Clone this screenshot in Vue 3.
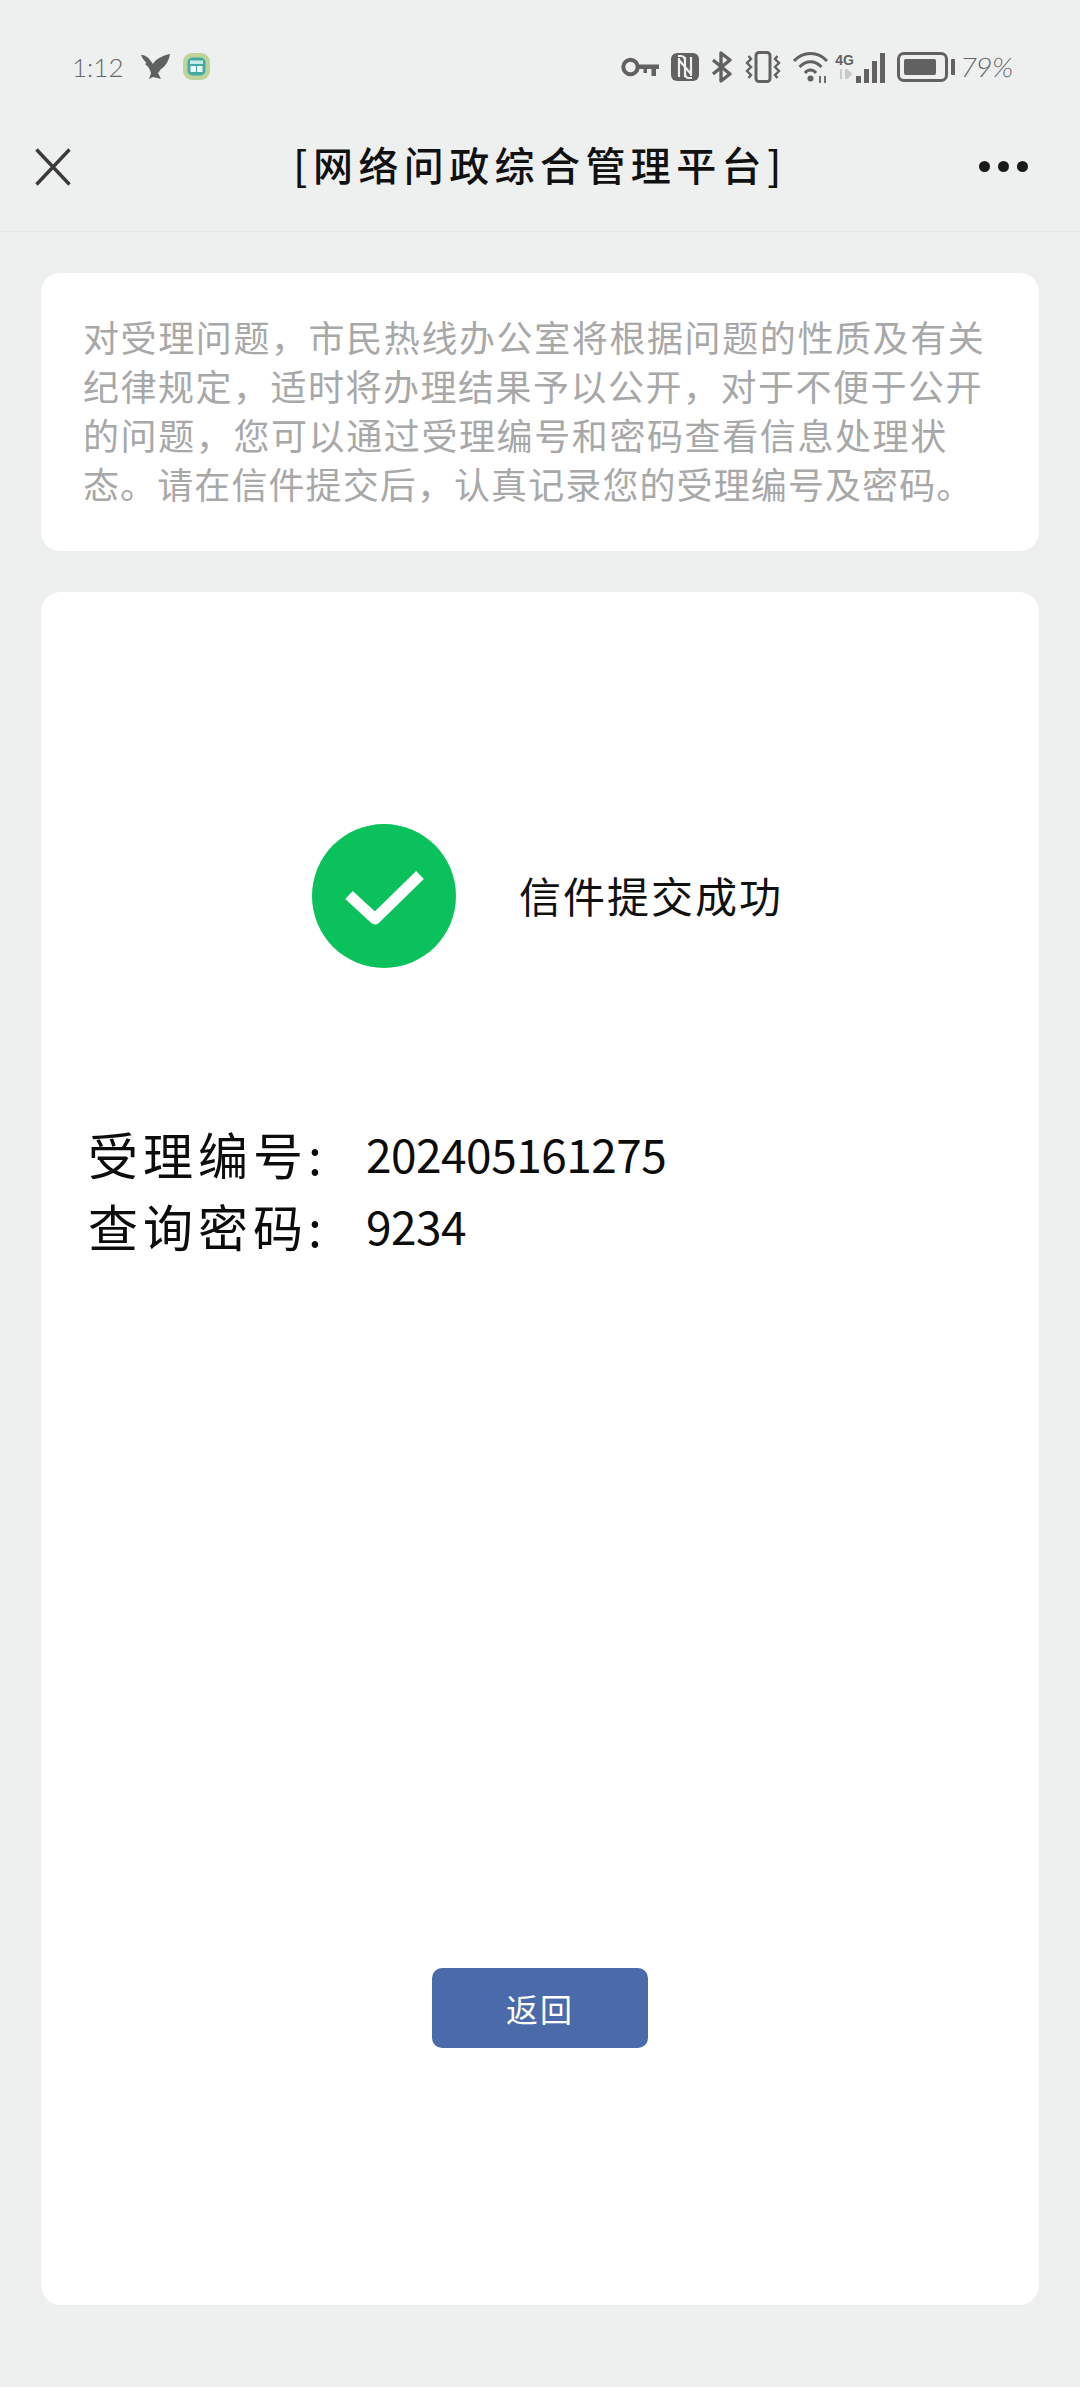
<script setup>
// fullwidth comma written as an escape so it stays fullwidth
const comma = '\uFF0C'
const introLines = [
  { text: `对受理问题${comma}市民热线办公室将根据问题的性质及有关`, spacing: '1.6px' },
  { text: `纪律规定${comma}适时将办理结果予以公开${comma}对于不便于公开`, spacing: '1.5px' },
  { text: `的问题${comma}您可以通过受理编号和密码查看信息处理状`, spacing: '1.6px' },
  { text: `态。请在信件提交后${comma}认真记录您的受理编号及密码。`, spacing: '1.1px' }
]
</script>

<template>
  <div class="page">
    <div class="status">
      <div class="status-left">
        <span class="time">1:12</span>
        <svg class="hawk" viewBox="0 0 29 26" width="29" height="26">
          <path d="M0 1 C4 1 7 3 9 6 L12 10 C14 6 20 2 29 0 C28 6 25 12 20 15 L17 19 L20 25 L12 23 L8 25 L10 19 C9 15 7 12 4 10 L5.5 9 C3 6 1 4 0 1 Z" fill="#5f6060"/>
        </svg>
        <svg class="app" viewBox="0 0 27 27" width="27" height="27">
          <rect width="27" height="27" rx="9" fill="#bcd49a"/>
          <rect x="4.5" y="4.5" width="18" height="18" rx="5" fill="#45aaa3"/>
          <rect x="7" y="7.5" width="13" height="3.5" fill="#c5ebe6"/>
          <rect x="7.5" y="13" width="5.4" height="6" fill="#eefaf8"/>
          <rect x="14.1" y="13" width="5.4" height="6" fill="#eefaf8"/>
        </svg>
      </div>
      <div class="status-right">
        <svg viewBox="0 0 38 20" width="38" height="20">
          <circle cx="9.5" cy="10" r="7.2" fill="none" stroke="#616161" stroke-width="4"/>
          <path d="M17 7.5 H38 V12 H35 V19 H30.5 V12 H26 V16 H22.5 V12 H17 Z" fill="#616161"/>
        </svg>
        <svg viewBox="0 0 28 28" width="28" height="28">
          <rect width="28" height="28" rx="6" fill="#616161"/>
          <path d="M7 3 H10 C12.5 3 14 5 14 8 V24 M21 25 H18 C15.5 25 14 23 14 20 V4 M8 5 V24 M20 4 V23 M8 7 L20 21" fill="none" stroke="#eef0f0" stroke-width="2.2"/>
        </svg>
        <svg viewBox="0 0 22 32" width="22" height="32">
          <path d="M2 9 L19 23 L10 30 V2 L19 9 L2 23" fill="none" stroke="#616161" stroke-width="3.4" stroke-linejoin="round"/>
        </svg>
        <svg class="vibrate" viewBox="0 0 36 32" width="36" height="32">
          <rect x="11" y="1.5" width="14" height="29" rx="3" fill="none" stroke="#616161" stroke-width="3"/>
          <path d="M3.5 5 L6 8 L2 12 L6 16 L2 20 L6 24 L3.5 27 M32.5 5 L30 8 L34 12 L30 16 L34 20 L30 24 L32.5 27" fill="none" stroke="#616161" stroke-width="2.4"/>
        </svg>
        <svg viewBox="0 0 36 32" width="36" height="32">
          <path d="M1 10 C10 0 25 0 34 10 M6.5 16 C13 9 22 9 28.5 16 M12 22 C15 18 20 18 23 22" fill="none" stroke="#616161" stroke-width="3"/>
          <circle cx="17.5" cy="27.5" r="3" fill="#616161"/>
          <path d="M27 32 V25 M32 32 V25" stroke="#616161" stroke-width="1.8"/>
        </svg>
        <div class="signal">
          <div class="net">
            <span class="net-label">4G</span>
            <svg viewBox="0 0 16 10" width="16" height="10"><path d="M4 0 V10 M9 0 V10 L14 5 L9 0" stroke="#c9c9c9" stroke-width="2" fill="#c9c9c9"/></svg>
          </div>
          <div class="bars">
            <i style="height: 7px"></i>
            <i style="height: 14px"></i>
            <i style="height: 22px"></i>
            <i style="height: 30px"></i>
          </div>
        </div>
        <div class="battery"><div class="battery-fill"></div></div>
        <div class="battery-nub"></div>
        <span class="percent">79%</span>
      </div>
    </div>

    <div class="nav">
      <svg class="close" viewBox="0 0 36 38" width="36" height="38">
        <path d="M1.5 1.5 L34.5 36.5 M34.5 1.5 L1.5 36.5" stroke="#3a3a3a" stroke-width="3.4" fill="none"/>
      </svg>
      <div class="title">[网络问政综合管理平台]</div>
      <div class="more"><i></i><i></i><i></i></div>
    </div>

    <div class="card intro">
      <div v-for="line in introLines" :key="line.text" class="intro-line" :style="{ letterSpacing: line.spacing }">{{ line.text }}</div>
    </div>

    <div class="card result">
      <div class="success">
        <svg viewBox="0 0 144 144" width="144" height="144">
          <circle cx="72" cy="72" r="72" fill="#0ac15c"/>
          <path d="M37 71 L63 95 L108 51" fill="none" stroke="#fff" stroke-width="11" stroke-linejoin="round"/>
        </svg>
        <span class="success-text">信件提交成功</span>
      </div>
      <div class="info">
        <div class="info-row"><span class="info-label">受理编号:</span><span class="info-value">202405161275</span></div>
        <div class="info-row"><span class="info-label">查询密码:</span><span class="info-value">9234</span></div>
      </div>
      <button class="back">返回</button>
    </div>
  </div>
</template>

<style scoped>
.page {
  width: 1080px;
  height: 2387px;
  overflow: hidden;
  background: #eef0f0;
  font-family: "Noto Sans CJK SC", "Noto Sans", sans-serif;
}

.status {
  height: 69px;
  padding: 32px 67px 0 72px;
  display: flex;
  justify-content: space-between;
  align-items: center;
}

.status-left,
.status-right {
  display: flex;
  align-items: center;
}

.status-left {
  gap: 13px;
}

.status-right {
  gap: 12px;
}

.time {
  font-family: Lato, sans-serif;
  font-weight: 300;
  font-size: 26px;
  color: #666;
}

.hawk {
  margin-left: 5px;
}

.percent {
  font-family: Lato, sans-serif;
  font-weight: 300;
  font-size: 27px;
  color: #666;
  margin-left: -6px;
  transform: skewX(-6deg);
}

.signal {
  position: relative;
  width: 49px;
  height: 32px;
  margin-left: -5px;
}

.net {
  position: absolute;
  left: 0;
  top: 0;
  width: 18px;
  display: flex;
  flex-direction: column;
  align-items: center;
}

.net-label {
  font-family: "Liberation Sans", sans-serif;
  font-size: 14px;
  font-weight: 700;
  line-height: 18px;
  color: #616161;
}

.bars {
  position: absolute;
  right: 0;
  bottom: 0;
  display: flex;
  align-items: flex-end;
  gap: 3px;
}

.bars i {
  display: block;
  width: 5px;
  background: #616161;
}

.battery {
  width: 51px;
  height: 30px;
  box-sizing: border-box;
  border: 3px solid #616161;
  border-radius: 7px;
  padding: 4px;
}

.battery-fill {
  width: 88%;
  height: 100%;
  background: #616161;
  border-radius: 2px;
}

.battery-nub {
  width: 4px;
  height: 16px;
  margin-left: -9px;
  background: #616161;
  border-radius: 1px;
}

.nav {
  position: relative;
  height: 131px;
  box-sizing: border-box;
  border-bottom: 1px solid #e5e7e7;
  display: flex;
  align-items: center;
  justify-content: space-between;
  padding: 0 52px 0 35px;
}

.title {
  position: absolute;
  left: 0;
  right: 0;
  text-align: center;
  font-size: 40px;
  font-weight: 500;
  letter-spacing: 5.4px;
  color: #111;
  top: 34px;
  line-height: 58px;
}

.close {
  margin-top: 1px;
}

.more {
  display: flex;
  gap: 8px;
  margin-top: 1px;
}

.more i {
  display: block;
  width: 11px;
  height: 11px;
  border-radius: 50%;
  background: #1a1a1a;
}

.card {
  margin: 0 41px;
  background: #fff;
  border-radius: 20px;
}

.intro {
  margin-top: 41px;
  height: 278px;
  box-sizing: border-box;
  padding: 39px 0 0 42px;
}

.intro-line {
  font-size: 36px;
  line-height: 49px;
  white-space: nowrap;
  color: #a8a8a8;
}

.result {
  margin-top: 41px;
  height: 1713px;
  box-sizing: border-box;
  display: flex;
  flex-direction: column;
  padding-top: 232px;
}

.success {
  display: flex;
  align-items: center;
  padding-left: 271px;
  gap: 63px;
}

.success-text {
  font-size: 42px;
  line-height: 60px;
  letter-spacing: 2px;
  color: #111;
  margin-top: -3px;
}

.info {
  margin-top: 149px;
  padding-left: 47px;
}

.info-row {
  display: flex;
  align-items: center;
  height: 72px;
  color: #0c0c0c;
}

.info-label {
  width: 278px;
  font-size: 50px;
  letter-spacing: 5px;
  white-space: nowrap;
}

.info-value {
  font-size: 46px;
  letter-spacing: -0.5px;
}

.back {
  margin: auto auto 257px;
  width: 216px;
  height: 80px;
  border: none;
  border-radius: 10px;
  background: #4a6aa9;
  color: #fff;
  font-family: inherit;
  font-size: 32px;
  letter-spacing: 2px;
}
</style>
